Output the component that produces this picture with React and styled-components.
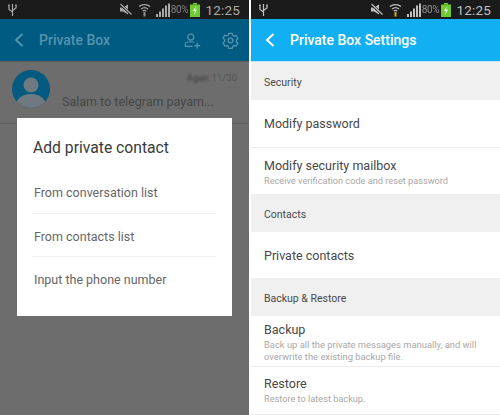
import React from 'react';
import styled, { createGlobalStyle } from 'styled-components';

const GlobalStyle = createGlobalStyle`
  html, body { margin: 0; padding: 0; background: #fff; }
  body { font-family: "Roboto", "Liberation Sans", sans-serif; }
`;

const Page = styled.div`
  width: 500px;
  height: 415px;
  display: flex;
  justify-content: space-between;
  overflow: hidden;
`;

const Phone = styled.div`
  position: relative;
  width: ${(p) => p.$width}px;
  height: 415px;
  display: flex;
  flex-direction: column;
  background: ${(p) => p.$bg};
  overflow: hidden;
`;

const StatusRow = styled.div`
  height: 19px;
  flex: none;
  background: #1b1b1b;
  display: flex;
  align-items: center;
  padding: 0 9px 0 8px;
  color: ${(p) => (p.$dim ? '#a9a9a9' : '#c0c0c0')};
`;

const StatusRight = styled.div`
  margin-left: auto;
  display: flex;
  align-items: center;
`;

const Percent = styled.span`
  font-size: 10px;
  margin: 0 2px 0 0;
  letter-spacing: -0.3px;
  opacity: 0.7;
`;

const Clock = styled.span`
  font-size: 13.5px;
  margin-left: 5px;
  letter-spacing: 0.2px;
`;

const AppBar = styled.div`
  height: 43px;
  box-sizing: border-box;
  flex: none;
  display: flex;
  align-items: center;
  background: ${(p) => p.$bg};
  color: ${(p) => p.$fg};
  border-bottom: 1px solid ${(p) => p.$line};
`;

const BackIcon = styled.svg`
  width: 10px;
  height: 16px;
  margin-left: 14px;
  flex: none;
`;

const BarTitle = styled.div`
  font-size: 14px;
  font-weight: 500;
  margin-left: 15px;
  flex: 1;
`;

const BarIcon = styled.svg`
  width: 17px;
  height: 17px;
  margin-right: ${(p) => p.$right}px;
  flex: none;
`;

const ChatRow = styled.div`
  height: 53px;
  display: flex;
  align-items: flex-start;
  padding: 8px 12px 0 12px;
  border-bottom: 1px solid #5f5f5f;
`;

const ChatBody = styled.div`
  flex: 1;
  margin-left: 12px;
  display: flex;
  flex-direction: column;
`;

const ChatMeta = styled.div`
  display: flex;
  justify-content: flex-end;
  align-items: center;
  gap: 3px;
  font-size: 9.5px;
  color: #555;
  height: 14px;
`;

const BlurName = styled.span`
  filter: blur(1.2px);
  color: #3c3c3c;
`;

const ChatText = styled.div`
  font-size: 12.5px;
  color: #474747;
  margin-top: 10px;
  white-space: nowrap;
`;

const Dialog = styled.div`
  position: absolute;
  left: 17px;
  top: 118px;
  width: 215px;
  height: 198px;
  background: #fff;
  box-sizing: border-box;
  padding: 20px 16px 0 15px;
`;

const DialogTitle = styled.div`
  font-size: 15.7px;
  line-height: 20px;
  color: #3a3a3a;
  margin-left: 1px;
  margin-bottom: 12px;
`;

const DialogItem = styled.div`
  height: 43.5px;
  line-height: 45px;
  font-size: 12.5px;
  color: #666;
  padding-left: 2px;
  box-sizing: border-box;
  border-bottom: ${(p) => (p.$last ? 'none' : '1px solid #f0f0f0')};
`;

const Section = styled.div`
  height: 38px;
  flex: none;
  box-sizing: border-box;
  background: #f0f0f0;
  display: flex;
  align-items: center;
  padding: 2px 0 0 13px;
  font-size: 10.5px;
  color: #4a4a4a;
`;

const Row = styled.div`
  height: ${(p) => p.$height}px;
  flex: none;
  box-sizing: border-box;
  background: #fff;
  display: flex;
  flex-direction: column;
  justify-content: center;
  padding: ${(p) => p.$top}px 13px 0;
  border-bottom: ${(p) => (p.$line ? '1px solid #ececec' : 'none')};
`;

const RowTitle = styled.div`
  font-size: 12.5px;
  line-height: 16px;
  color: #484848;
`;

const RowSub = styled.div`
  font-size: ${(p) => (p.$wide ? 9.4 : 9.2)}px;
  line-height: 11.5px;
  color: #a8a8a8;
  margin-top: 1px;
`;

function UsbIcon({ color }) {
  return (
    <svg width="9" height="14" viewBox="0 0 9 14" fill="none" stroke={color} strokeWidth="1.2">
      <path d="M4.5 1v12M1 3v3.5l3.5 2.5M8 3v2l-3.5 2.5" />
      <rect x="0.2" y="1.5" width="1.6" height="1.6" fill={color} stroke="none" />
      <rect x="7.2" y="1.5" width="1.6" height="1.6" fill={color} stroke="none" />
    </svg>
  );
}

function MuteIcon({ color }) {
  return (
    <svg width="14" height="13" viewBox="0 0 14 13" fill={color}>
      <path d="M1 4.5h3L9 1.5v10L4 8.5H1z" />
      <path d="M1 1l12 11" stroke="#1b1b1b" strokeWidth="2.4" />
      <path d="M1.5 1l11 10.5" stroke={color} strokeWidth="1.2" />
    </svg>
  );
}

function WifiIcon({ color, arrow }) {
  return (
    <svg width="13" height="14" viewBox="0 0 13 14" fill="none" stroke={color} strokeWidth="1.3" style={{ marginLeft: 5 }}>
      <path d="M1 3.5c3-2.6 8-2.6 11 0M3 6c2-1.6 5-1.6 7 0" />
      <path d="M4.7 8c1-.7 2.6-.7 3.6 0" />
      <path d="M6.5 9v4.5" stroke={arrow} strokeWidth="2" />
    </svg>
  );
}

function SignalIcon({ color }) {
  return (
    <svg width="15" height="14" viewBox="0 0 15 14" fill={color} style={{ marginLeft: 5 }}>
      <rect x="0" y="11" width="2" height="3" />
      <rect x="3" y="8.5" width="2" height="5.5" />
      <rect x="6" y="5.5" width="2" height="8.5" />
      <rect x="9" y="2.5" width="2" height="11.5" />
      <rect x="12" y="0.5" width="2" height="13.5" />
    </svg>
  );
}

function BatteryIcon() {
  return (
    <svg width="10" height="14" viewBox="0 0 10 14">
      <rect x="3" y="0" width="4" height="1.5" fill="#7bd13c" />
      <rect x="0" y="1.5" width="10" height="12.5" fill="#6fcb31" />
      <path d="M6 3L3 8h2l-1 4 3-5.5H5z" fill="#f4fff0" />
    </svg>
  );
}

function StatusBar({ dim, arrow }) {
  const color = dim ? '#a9a9a9' : '#c0c0c0';
  return (
    <StatusRow $dim={dim}>
      <UsbIcon color={color} />
      <StatusRight>
        <MuteIcon color={color} />
        <WifiIcon color={color} arrow={arrow} />
        <SignalIcon color={color} />
        <Percent>80%</Percent>
        <BatteryIcon />
        <Clock>12:25</Clock>
      </StatusRight>
    </StatusRow>
  );
}

function Back({ color }) {
  return (
    <BackIcon viewBox="0 0 10 16" fill="none" stroke={color} strokeWidth="2">
      <path d="M8.5 2L2 8l6.5 6" />
    </BackIcon>
  );
}

function Avatar() {
  return (
    <svg width="38" height="38" viewBox="0 0 38 38" style={{ flex: 'none' }}>
      <clipPath id="avatar-clip">
        <circle cx="19" cy="19" r="19" />
      </clipPath>
      <circle cx="19" cy="19" r="19" fill="#045a80" />
      <g clipPath="url(#avatar-clip)" fill="#6f7a80">
        <circle cx="19" cy="15" r="7.5" />
        <ellipse cx="19" cy="35" rx="15" ry="11" />
      </g>
    </svg>
  );
}

export default function App() {
  return (
    <Page>
      <GlobalStyle />
      <Phone $width={249} $bg="#6d6d6d">
        <StatusBar dim arrow="#8f8f8f" />
        <AppBar $bg="#005b82" $fg="#5693ac" $line="#5f5f5f">
          <Back color="#5693ac" />
          <BarTitle>Private Box</BarTitle>
          <BarIcon $right={21} viewBox="0 0 20 20" fill="none" stroke="#5693ac" strokeWidth="1.4">
            <circle cx="8" cy="6" r="3.6" />
            <path d="M1.5 17v-2.5c0-2 2.5-3 6.5-3 1.5 0 2.8.2 3.8.5M1.5 17H10" />
            <path d="M15.5 12.5v7M12 16h7" />
          </BarIcon>
          <BarIcon $right={10} viewBox="0 0 20 20" fill="none" stroke="#5693ac" strokeWidth="1.5">
            <path d="M8 1.5h4l.6 2.4 1.7 1 2.4-.7 2 3.5-1.8 1.7v2l1.8 1.7-2 3.5-2.4-.7-1.7 1-.6 2.4H8l-.6-2.4-1.7-1-2.4.7-2-3.5L3.1 11V9L1.3 7.2l2-3.5 2.4.7 1.7-1z" />
            <circle cx="10" cy="10" r="2.8" />
          </BarIcon>
        </AppBar>
        <ChatRow>
          <Avatar />
          <ChatBody>
            <ChatMeta>
              <BlurName>Agan</BlurName>
              <span>11/30</span>
            </ChatMeta>
            <ChatText>Salam to telegram payam...</ChatText>
          </ChatBody>
        </ChatRow>
        <Dialog>
          <DialogTitle>Add private contact</DialogTitle>
          <DialogItem>From conversation list</DialogItem>
          <DialogItem>From contacts list</DialogItem>
          <DialogItem $last>Input the phone number</DialogItem>
        </Dialog>
      </Phone>
      <Phone $width={249} $bg="#fff">
        <StatusBar arrow="#d8a72a" />
        <AppBar $bg="#12b0f2" $fg="#fff" $line="#bfe6f7">
          <Back color="#fff" />
          <BarTitle>Private Box Settings</BarTitle>
        </AppBar>
        <Section>Security</Section>
        <Row $height={48} $top={1} $line>
          <RowTitle>Modify password</RowTitle>
        </Row>
        <Row $height={46} $top={2}>
          <RowTitle>Modify security mailbox</RowTitle>
          <RowSub>Receive verification code and reset password</RowSub>
        </Row>
        <Section>Contacts</Section>
        <Row $height={46} $top={2}>
          <RowTitle>Private contacts</RowTitle>
        </Row>
        <Section>Backup &amp; Restore</Section>
        <Row $height={51} $top={2} $line>
          <RowTitle>Backup</RowTitle>
          <RowSub $wide>Back up all the private messages manually, and will overwrite the existing backup file.</RowSub>
        </Row>
        <Row $height={48} $top={0} $line>
          <RowTitle>Restore</RowTitle>
          <RowSub>Restore to latest backup.</RowSub>
        </Row>
      </Phone>
    </Page>
  );
}
